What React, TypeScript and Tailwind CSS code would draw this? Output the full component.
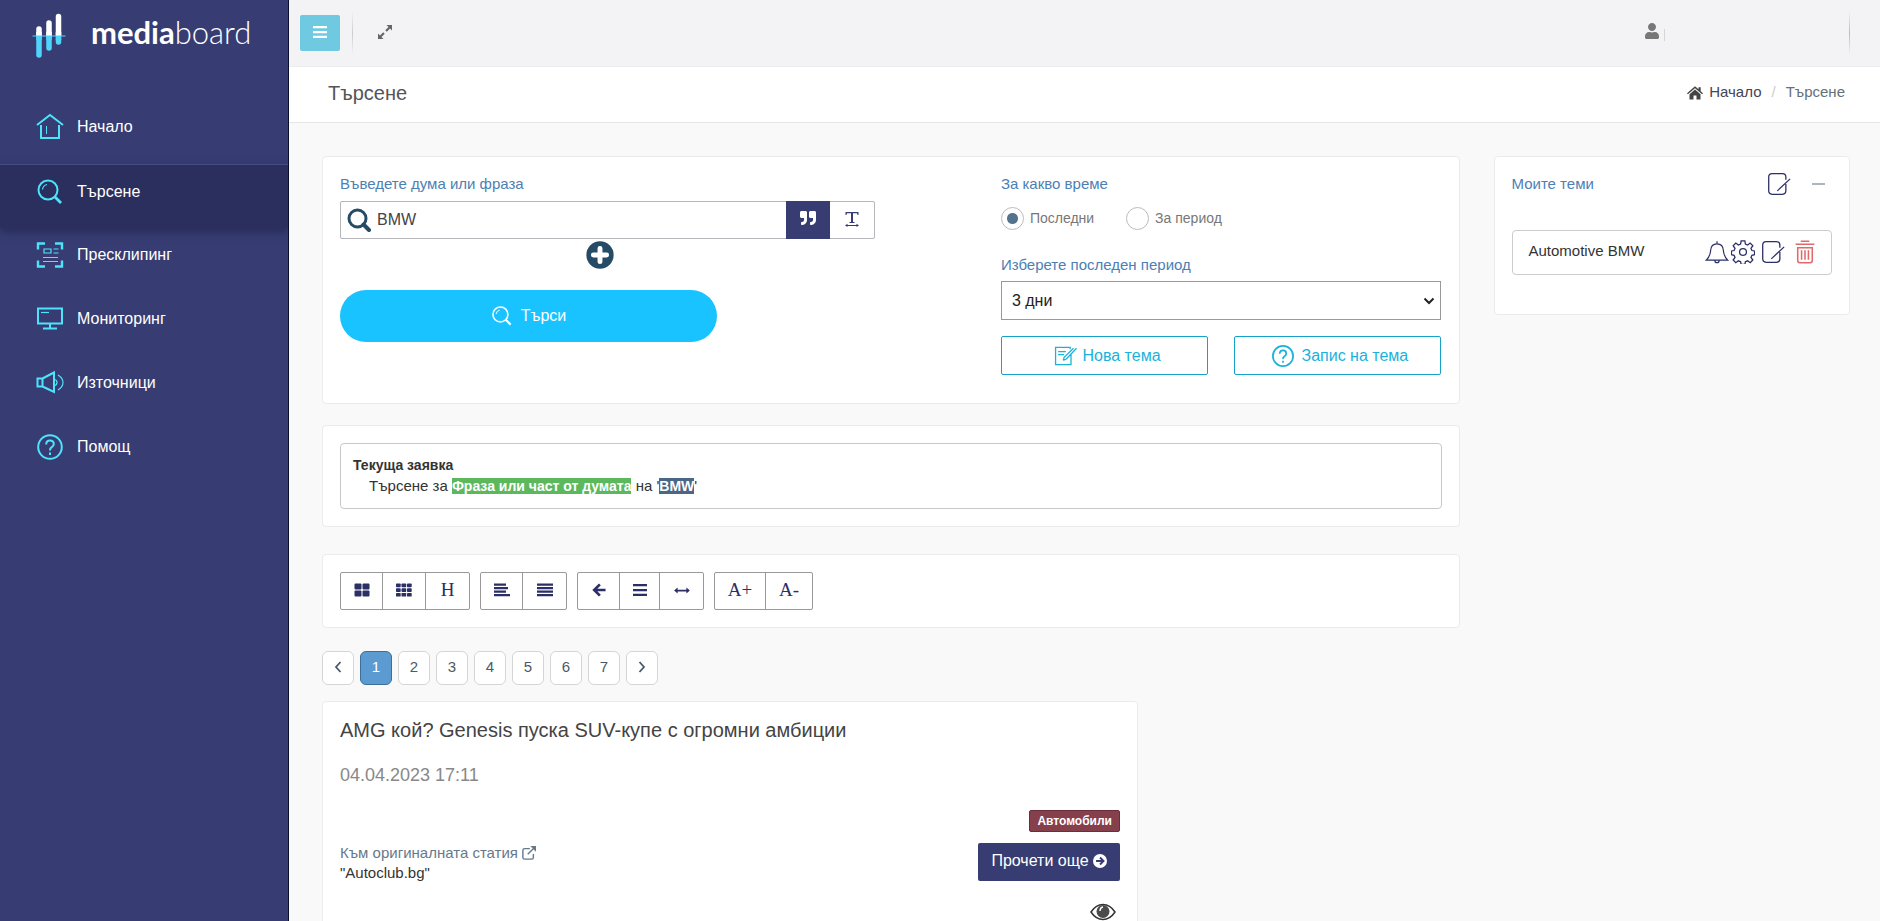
import type { ReactNode } from 'react'
import { FaQuoteRight, FaUser } from 'react-icons/fa'

type IconProps = { className?: string }

function LineIcon({ className, children, width = 2 }: IconProps & { children: ReactNode; width?: number }) {
  return (
    <svg
      viewBox="0 0 28 28"
      className={className}
      fill="none"
      stroke="currentColor"
      strokeWidth={width}
      aria-hidden="true"
    >
      {children}
    </svg>
  )
}

function SolidIcon({ className, children }: IconProps & { children: ReactNode }) {
  return (
    <svg viewBox="0 0 16 16" className={className} fill="currentColor" aria-hidden="true">
      {children}
    </svg>
  )
}

function Logo() {
  return (
    <svg viewBox="0 0 34 46" className="w-[34px] h-[46px]" aria-hidden="true">
      <g stroke="#fff" strokeWidth="5.5" strokeLinecap="round">
        <path d="M7 16v7M17 10v13M26.500 3.500v19" />
      </g>
      <g stroke="#4fd5fb" strokeWidth="5.5" strokeLinecap="round">
        <path d="M7 26v16M17 26v9M26.500 26v3" />
      </g>
      <path d="M4.250 19h5.500v4h-5.500zM14.250 19h5.500v4h-5.500zM23.750 19h5.500v4h-5.500z" fill="#fff" />
      <path d="M4.250 23h5.500v4h-5.500zM14.250 23h5.500v4h-5.500zM23.750 23h5.500v4h-5.500z" fill="#4fd5fb" />
      <path d="M0.500 23h33" stroke="#4fd5fb" />
    </svg>
  )
}

function HomeIcon({ className }: IconProps) {
  return (
    <LineIcon className={className}>
      <path d="M1 12L14 2l13 10M5 12v13h18V12" />
      <path d="M10.500 13v8" strokeWidth="1" />
    </LineIcon>
  )
}

function SearchIcon({ className }: IconProps) {
  return (
    <LineIcon className={className}>
      <circle cx="12" cy="12" r="9.500" />
      <path d="M18.500 18.500l6.500 6.500" strokeWidth="2.800" />
      <path d="M6.500 11.500q.5-4 4.500-5" strokeWidth="1.200" />
    </LineIcon>
  )
}

function PressIcon({ className }: IconProps) {
  return (
    <LineIcon className={className}>
      <path d="M2 8.500V2.500h7M19 2.500h7v6M26 19.500v6h-7M9 25.500H2v-6" strokeWidth="2.400" />
      <path d="M8 8h7v4H8zM17.500 8h5M17.500 12h5M7 16.500h15M7 20.500h15" strokeWidth="1.200" />
    </LineIcon>
  )
}

function MonitorIcon({ className }: IconProps) {
  return (
    <LineIcon className={className}>
      <path d="M2 3.500h24v15H2zM14 19v5M7 23.500h14" />
      <path d="M5 7.500h8" strokeWidth="1.200" />
    </LineIcon>
  )
}

function SpeakerIcon({ className }: IconProps) {
  return (
    <LineIcon className={className}>
      <path d="M1.500 9.500v8h5v-8zM6.500 9.500L18 3.500v19.500L6.500 17.500" />
      <path d="M18 10.500q3 0 3 3t-3 3M22 6q5 3 5 7.500t-5 7.500" strokeWidth="1.200" />
    </LineIcon>
  )
}

function HelpIcon({ className }: IconProps) {
  return (
    <LineIcon className={className}>
      <circle cx="14" cy="14" r="11.800" />
      <path d="M10.200 11.500q0-4 3.800-4t3.800 3.500q0 2-2 3.200T14 17.500" />
      <path d="M14 19.500v2.500" />
    </LineIcon>
  )
}

function NoteIcon({ className }: IconProps) {
  return (
    <LineIcon className={className} width={1.5}>
      <path d="M22 9V6q0-4-4-4H6Q2 2 2 6v16q0 4 4 4h12q4 0 4-4v-8" />
      <path d="M12 22L27 8" />
    </LineIcon>
  )
}

function NewTopicIcon({ className }: IconProps) {
  return (
    <LineIcon className={className} width={1.5}>
      <path d="M20 6V4H3v20h18V12M6 9h9M6 12.500h7M15.500 17.500L27.500 5M12 19l1-3.500L24 5M12 19l3.500-1.500" />
    </LineIcon>
  )
}

function BellIcon({ className }: IconProps) {
  return (
    <LineIcon className={className} width={1.4}>
      <path d="M1.500 23.500Q6 19 6.500 12.500Q7 4.500 14 4.500t7.500 8Q22 19 26.500 23.500zM14 1.500v3M11.500 23.500q0 3 2.500 3t2.500-3" />
    </LineIcon>
  )
}

function GearIcon({ className }: IconProps) {
  return (
    <LineIcon className={className} width={1.5}>
      <circle cx="14" cy="14" r="4" />
      <path d="M11.800 1h4.400l.6 3.700 2.600 1.100 3-2.200 3.100 3.100-2.200 3 1.100 2.600 3.100.5v4.400l-3.100.6-1.100 2.600 2.200 3-3.100 3.100-3-2.200-2.600 1.100-.6 3h-4.400l-.6-3-2.600-1.100-3 2.200-3.100-3.100 2.200-3-1.100-2.600-3.100-.6v-4.400l3.100-.5 1.100-2.600-2.200-3 3.100-3.100 3 2.200 2.600-1.100z" />
    </LineIcon>
  )
}

function TrashIcon({ className }: IconProps) {
  return (
    <LineIcon className={className} width={1.8}>
      <path d="M9 1.500h10M3 5h22M5.500 9h17v15q0 2.500-2.500 2.500H8Q5.500 26.500 5.500 24zM10 12v11M14 12v11M18 12v11" />
    </LineIcon>
  )
}

function ExpandIcon({ className }: IconProps) {
  return (
    <SolidIcon className={className}>
      <path d="M9.500 1H15v5.500l-2-2-3.200 3.200-1.500-1.500L11.500 3zM1 9.500V15h5.500l-2-2 3.200-3.200-1.500-1.500L3 11.500z" />
    </SolidIcon>
  )
}

function HouseSolid({ className }: IconProps) {
  return (
    <SolidIcon className={className}>
      <path d="M8 1.300l3.500 3V2.300h2.200v4L16 8.300l-.9 1L8 3.300.9 9.300 0 8.300zM8 4.500l5.500 4.700v5.300h-4v-4h-3v4h-4V9.200z" />
    </SolidIcon>
  )
}

function MenuIcon({ className }: IconProps) {
  return (
    <SolidIcon className={className}>
      <path d="M1 2h14v2.300H1zM1 6.900h14v2.300H1zM1 11.800h14v2.300H1z" />
    </SolidIcon>
  )
}

function TilesIcon({ className }: IconProps) {
  return (
    <SolidIcon className={className}>
      <rect x="0.500" y="1.500" width="7" height="6" rx="1" />
      <rect x="8.500" y="1.500" width="7" height="6" rx="1" />
      <rect x="0.500" y="8.500" width="7" height="6" rx="1" />
      <rect x="8.500" y="8.500" width="7" height="6" rx="1" />
    </SolidIcon>
  )
}

function GridIcon({ className }: IconProps) {
  return (
    <SolidIcon className={className}>
      {[1.5, 6.2, 10.9].map((y) =>
        [0, 5.5, 11].map((x) => <rect key={`${x}-${y}`} x={x} y={y} width="4.700" height="3.700" rx="0.700" />),
      )}
    </SolidIcon>
  )
}

function AlignLeftIcon({ className }: IconProps) {
  return (
    <SolidIcon className={className}>
      <path d="M0 1.500h12v2.300H0zM0 5h14v2.300H0zM0 8.500h12v2.300H0zM0 12h16v2.300H0z" />
    </SolidIcon>
  )
}

function AlignJustifyIcon({ className }: IconProps) {
  return (
    <SolidIcon className={className}>
      <path d="M0 1.500h16v2.300H0zM0 5h16v2.300H0zM0 8.500h16v2.300H0zM0 12h16v2.300H0z" />
    </SolidIcon>
  )
}

function ArrowLeftIcon({ className }: IconProps) {
  return (
    <svg viewBox="0 0 16 16" className={className} fill="none" stroke="currentColor" strokeWidth="3" aria-hidden="true">
      <path d="M9 1.500L2.500 8 9 14.500M3 8h12.500" />
    </svg>
  )
}

function TextWidthIcon({ className }: IconProps) {
  return (
    <SolidIcon className={className}>
      <path d="M1.500 1h13v3h-.9L13 2.200H9V11h1.500v1h-5v-1H7V2.200H3L2.400 4h-.9zM3.500 14h9v-1.300L15 14.500 12.500 16v-1h-9v1L1 14.500 3.500 12.700z" />
    </SolidIcon>
  )
}

function MagnifierIcon({ className }: IconProps) {
  return (
    <svg viewBox="0 0 24 24" className={className} fill="none" stroke="currentColor" aria-hidden="true">
      <circle cx="10.500" cy="10.500" r="8.500" strokeWidth="3" />
      <path d="M16.500 16.500l5.500 5.500" strokeWidth="4" strokeLinecap="round" />
    </svg>
  )
}

function PlusCircleIcon({ className }: IconProps) {
  return (
    <SolidIcon className={className}>
      <circle cx="8" cy="8" r="7.800" />
      <path d="M8 4.200v7.600M4.200 8h7.600" stroke="#fff" strokeWidth="2.800" strokeLinecap="round" />
    </SolidIcon>
  )
}

function ArrowCircleIcon({ className }: IconProps) {
  return (
    <SolidIcon className={className}>
      <circle cx="8" cy="8" r="8" />
      <path d="M3.500 8h8M8 4l4 4-4 4" fill="none" stroke="#373d72" strokeWidth="2.200" />
    </SolidIcon>
  )
}

function ArrowsIcon({ className }: IconProps) {
  return (
    <svg viewBox="0 0 18 8" className={className} fill="currentColor" aria-hidden="true">
      <path d="M0 4L4 .5V3h10V.5L18 4l-4 3.500V5H4v2.500z" />
    </svg>
  )
}

function ExternalIcon({ className }: IconProps) {
  return (
    <svg viewBox="0 0 16 16" className={className} fill="none" stroke="currentColor" strokeWidth="1.600" aria-hidden="true">
      <path d="M9 3H3Q1 3 1 5v8q0 2 2 2h8q2 0 2-2V9M6.500 9.500L13.500 2.500" />
      <path d="M9.500 0H16v6.500z" fill="currentColor" stroke="none" />
    </svg>
  )
}

function EyeIcon({ className }: IconProps) {
  return (
    <svg viewBox="0 0 26 18" className={className} aria-hidden="true">
      <path d="M1 9Q6 1.500 13 1.500T25 9q-5 7.500-12 7.500T1 9z" fill="#fff" stroke="#333" strokeWidth="1.500" />
      <circle cx="13" cy="8.500" r="6.500" fill="#4a4a4a" />
      <path d="M10 8q0-3.500 3-4" fill="none" stroke="#fff" strokeWidth="1.400" />
    </svg>
  )
}

const navItems = [
  { label: 'Начало', icon: HomeIcon },
  { label: 'Търсене', icon: SearchIcon, active: true },
  { label: 'Пресклипинг', icon: PressIcon },
  { label: 'Мониторинг', icon: MonitorIcon },
  { label: 'Източници', icon: SpeakerIcon },
  { label: 'Помощ', icon: HelpIcon },
]

function Sidebar() {
  return (
    <aside className="w-[289px] shrink-0 overflow-hidden bg-[#373d72] border-r border-[#0b0d2e]">
      <a href="#" className="h-[100px] pl-8 pt-[13px] flex items-start text-white">
        <Logo />
        <span className="pl-[25px] font-[Lato] font-light text-[31px] leading-[38px]">
          <b className="font-bold">media</b>board
        </span>
      </a>
      <nav>
        {navItems.map(({ label, icon: Icon, active }) => (
          <a
            key={label}
            href="#"
            className={
              active
                ? 'h-16 pl-9 pb-[10px] flex items-center gap-[13px] text-white bg-[#2a2f5e] border-t border-[#454b85] shadow-[0_4px_8px_rgba(30,34,75,0.6)]'
                : 'h-16 pl-9 pb-[10px] flex items-center gap-[13px] text-white'
            }
          >
            <Icon className="size-7 text-[#4fe3fb]" />
            <span className="text-base">{label}</span>
          </a>
        ))}
      </nav>
    </aside>
  )
}

function Topbar() {
  return (
    <header className="h-[67px] bg-[#f3f3f5] border-b border-[#ececee] pl-[11px] pr-[30px] flex items-center">
      <button
        type="button"
        aria-label="Меню"
        className="w-10 h-9 rounded-xs bg-[#6fc9e0] text-white flex items-center justify-center pb-[2px]"
      >
        <MenuIcon className="size-4" />
      </button>
      <div className="w-px h-11 ml-3 bg-gradient-to-b from-transparent via-[#ccc] to-transparent" />
      <button type="button" aria-label="Цял екран" className="ml-6 pb-[3px] text-[#666]">
        <ExpandIcon className="size-4" />
      </button>
      <div className="ml-auto mr-[184px] pb-[5px] flex items-center gap-1 text-[#777]">
        <FaUser className="size-4" />
        <span className="w-px h-3 mt-2 bg-[#d5d5d5]" />
      </div>
      <div className="w-px h-11 bg-gradient-to-b from-transparent via-[#bbb] to-transparent" />
    </header>
  )
}

const card = 'bg-white border border-[#ebebeb] rounded-sm'
const fieldLabel = 'text-[15px] leading-5 text-[#4c80b4]'
const radio =
  'appearance-none size-[23px] rounded-full border border-[#bbb] bg-white checked:bg-[radial-gradient(circle,#54738c_5px,#fff_6px)]'

function SearchCard() {
  return (
    <section className={`${card} h-[248px] px-[17px] pt-[17px] flex`}>
      <div className="w-3/5">
        <label htmlFor="phrase" className={`${fieldLabel} block`}>
          Въведете дума или фраза
        </label>
        <div className="mt-[7px] w-[535px] h-[38px] border border-[#b5b5ba] rounded-xs flex items-stretch">
          <MagnifierIcon className="size-6 ml-[6px] self-center text-[#264b66]" />
          <input id="phrase" defaultValue="BMW" className="flex-1 min-w-0 pl-[6px] text-base text-[#444] outline-none" />
          <button
            type="button"
            aria-label="Фраза"
            className="w-11 -my-px bg-[#373d72] text-white flex items-center justify-center pb-1"
          >
            <FaQuoteRight className="size-4" />
          </button>
          <button type="button" aria-label="Дума" className="w-11 pb-[2px] text-[#373d72] flex items-center justify-center">
            <TextWidthIcon className="size-4" />
          </button>
        </div>
        <div className="w-[519px] mt-[2px] flex justify-center">
          <button type="button" aria-label="Добави" className="text-[#264b66]">
            <PlusCircleIcon className="size-7" />
          </button>
        </div>
        <button
          type="button"
          className="mt-[21px] w-[377px] h-[52px] rounded-full bg-[#18c3ff] text-white text-base flex items-center justify-center gap-2"
        >
          <SearchIcon className="size-[22px]" />
          Търси
        </button>
      </div>

      <div className="w-2/5">
        <fieldset>
          <legend className={fieldLabel}>За какво време</legend>
          <div className="mt-[5px] h-[38px] flex items-center gap-8 text-sm text-[#777]">
            <label className="flex items-center gap-[6px]">
              <input type="radio" name="time" defaultChecked className={radio} />
              Последни
            </label>
            <label className="flex items-center gap-[6px]">
              <input type="radio" name="time" className={radio} />
              За период
            </label>
          </div>
        </fieldset>
        <label htmlFor="period" className={`${fieldLabel} block mt-[18px]`}>
          Изберете последен период
        </label>
        <div className="relative mt-[6px]">
          <select
            id="period"
            className="appearance-none w-full h-[39px] pl-[10px] border border-[#999] bg-white text-base text-[#222]"
          >
            <option>3 дни</option>
            <option>7 дни</option>
          </select>
          <svg
            viewBox="0 0 12 8"
            className="absolute right-[6px] top-4 w-3 h-2"
            fill="none"
            stroke="#222"
            strokeWidth="2"
            aria-hidden="true"
          >
            <path d="M1.500 1.500L6 6l4.500-4.500" />
          </svg>
        </div>
        <div className="mt-4 grid grid-cols-2 gap-[26px] text-base text-[#1ab2dc]">
          <button
            type="button"
            className="h-[39px] pl-1 border border-[#17a2cc] rounded-xs flex items-center justify-center gap-[6px]"
          >
            <NewTopicIcon className="size-6" />
            Нова тема
          </button>
          <button
            type="button"
            className="h-[39px] pl-1 border border-[#17a2cc] rounded-xs flex items-center justify-center gap-[6px]"
          >
            <HelpIcon className="size-6" />
            Запис на тема
          </button>
        </div>
      </div>
    </section>
  )
}

function QueryCard() {
  return (
    <section className={`${card} mt-[21px] h-[102px] p-[17px] text-[#333]`}>
      <div className="h-[66px] border border-[#c8c8c8] rounded-sm pl-3 pt-[11px]">
        <h2 className="text-sm leading-5 font-bold">Текуща заявка</h2>
        <p className="pl-4 text-[15px] leading-[21px]">
          Търсене за <mark className="bg-[#5cb85c] text-white text-sm font-bold">Фраза или част от думата</mark> на &#39;
          <mark className="bg-[#4a6785] text-white text-sm font-bold">BMW</mark>&#39;
        </p>
      </div>
    </section>
  )
}

const toolGroups = [
  [
    { label: 'Големи карти', width: 'w-[42px]', icon: <TilesIcon className="size-4" /> },
    { label: 'Малки карти', width: 'w-[43px]', icon: <GridIcon className="size-4" /> },
    { label: 'Заглавия', width: 'w-[43px]', icon: 'H' },
  ],
  [
    { label: 'Ляво', width: 'w-[42px]', icon: <AlignLeftIcon className="size-4" /> },
    { label: 'Двустранно', width: 'w-[43px]', icon: <AlignJustifyIcon className="size-4" /> },
  ],
  [
    { label: 'Назад', width: 'w-[42px]', icon: <ArrowLeftIcon className="size-[14px]" /> },
    { label: 'Списък', width: 'w-10', icon: <MenuIcon className="size-4" /> },
    { label: 'Ширина', width: 'w-[43px]', icon: <ArrowsIcon className="w-4 h-[7px]" /> },
  ],
  [
    { label: 'По-голям текст', width: 'w-[51px]', icon: 'A+' },
    { label: 'По-малък текст', width: 'w-[46px]', icon: 'A-' },
  ],
]

function Toolbar() {
  return (
    <section className={`${card} mt-[27px] h-[74px] px-[17px] flex items-center gap-[10px]`}>
      {toolGroups.map((group, i) => (
        <div key={i} className="flex h-[38px] border border-[#999] rounded-xs divide-x divide-[#999]">
          {group.map((tool) => (
            <button
              key={tool.label}
              type="button"
              title={tool.label}
              className={`${tool.width} pb-[2px] flex items-center justify-center text-[#2a2f66] text-[19px] font-['Liberation_Serif',serif]`}
            >
              {tool.icon}
            </button>
          ))}
        </div>
      ))}
    </section>
  )
}

function Chevron({ d }: { d: string }) {
  return (
    <svg viewBox="0 0 8 12" className="w-2 h-3" fill="none" stroke="currentColor" strokeWidth="1.800" aria-hidden="true">
      <path d={d} />
    </svg>
  )
}

function Pagination() {
  const base = 'w-8 h-[34px] pb-[2px] rounded-md border flex items-center justify-center'
  return (
    <nav aria-label="Страници" className="mt-[23px] flex gap-[6px] text-[15px] text-[#4a5a68]">
      <a href="#" aria-label="Предишна" className={`${base} bg-white border-[#d5d5d5]`}>
        <Chevron d="M6.500 1L2 6l4.500 5" />
      </a>
      {[1, 2, 3, 4, 5, 6, 7].map((page) => (
        <a
          key={page}
          href="#"
          className={
            page === 1 ? `${base} bg-[#5b9bd1] border-[#3f6f99] text-white` : `${base} bg-white border-[#d5d5d5]`
          }
        >
          {page}
        </a>
      ))}
      <a href="#" aria-label="Следваща" className={`${base} bg-white border-[#d5d5d5]`}>
        <Chevron d="M1.500 1L6 6l-4.500 5" />
      </a>
    </nav>
  )
}

function Article() {
  return (
    <article className={`${card} mt-4 w-[816px] max-w-full px-[17px] pt-[14px] pb-8`}>
      <h2 className="text-xl leading-7 text-[#444]">AMG кой? Genesis пуска SUV-купе с огромни амбиции</h2>
      <p className="mt-[17px] text-lg leading-7 text-[#888]">04.04.2023 17:11</p>
      <div className="mt-[21px] flex justify-end">
        <span className="h-[22px] px-[7px] rounded-xs bg-[#86404c] border border-[#6b2f3a] text-white text-xs leading-5 font-bold">
          Автомобили
        </span>
      </div>
      <div className="mt-[11px] flex justify-between items-start">
        <div className="text-[15px] leading-5 text-[#333]">
          <a href="#" className="flex items-center gap-1 text-[#66798c]">
            Към оригиналната статия
            <ExternalIcon className="size-[14px]" />
          </a>
          <p>"Autoclub.bg"</p>
        </div>
        <button
          type="button"
          className="w-[142px] h-[38px] pb-[2px] rounded-xs bg-[#373d72] text-white text-base flex items-center justify-center gap-1"
        >
          Прочети още
          <ArrowCircleIcon className="size-[14px]" />
        </button>
      </div>
      <div className="mt-5 pr-1 flex justify-end">
        <EyeIcon className="w-[26px] h-[18px]" />
      </div>
    </article>
  )
}

function Topics() {
  return (
    <section className={`${card} h-[159px] px-[17px] pt-3 self-start`}>
      <div className="h-[30px] flex items-center text-[#4c80b4]">
        <h2 className="text-[15px]">Моите теми</h2>
        <button type="button" aria-label="Нова тема" className="ml-auto text-[#2a2f66]">
          <NoteIcon className="size-6" />
        </button>
        <button type="button" aria-label="Свий" className="ml-[21px] mr-[7px] w-[13px] h-[2px] bg-[#a9b5bf]" />
      </div>
      <div className="mt-[31px] h-[45px] border border-[#ccc] rounded-sm pl-4 pr-[14px] pb-[2px] flex items-center text-[#2a2f66]">
        <span className="mr-auto text-[15px] text-[#333]">Automotive BMW</span>
        <button type="button" aria-label="Известия">
          <BellIcon className="size-6" />
        </button>
        <button type="button" aria-label="Настройки" className="ml-[2px]">
          <GearIcon className="size-6" />
        </button>
        <button type="button" aria-label="Редакция" className="ml-[6px]">
          <NoteIcon className="size-6" />
        </button>
        <button type="button" aria-label="Изтриване" className="ml-2 text-[#e0696b]">
          <TrashIcon className="size-6" />
        </button>
      </div>
    </section>
  )
}

export default function App() {
  return (
    <div className="h-screen flex overflow-hidden bg-[#f9f9f9] font-['Liberation_Sans',Arial,sans-serif]">
      <Sidebar />
      <div className="flex-1 min-w-0">
        <Topbar />
        <div className="h-14 bg-white border-b border-[#e7e7e7] pl-[39px] pr-[35px] pb-1 flex items-center justify-between">
          <h1 className="text-xl text-[#555]">Търсене</h1>
          <ol className="flex items-center text-[15px] text-[#66707a]">
            <li>
              <a href="#" className="flex items-center gap-[6px] text-[#445]">
                <HouseSolid className="size-4 text-[#444]" />
                Начало
              </a>
            </li>
            <li className="px-[10px] text-[#ccc]">/</li>
            <li>Търсене</li>
          </ol>
        </div>
        <main className="pl-[33px] pr-[30px] pt-[33px] grid grid-cols-4 gap-[34px]">
          <div className="col-span-3">
            <SearchCard />
            <QueryCard />
            <Toolbar />
            <Pagination />
            <Article />
          </div>
          <Topics />
        </main>
      </div>
    </div>
  )
}
